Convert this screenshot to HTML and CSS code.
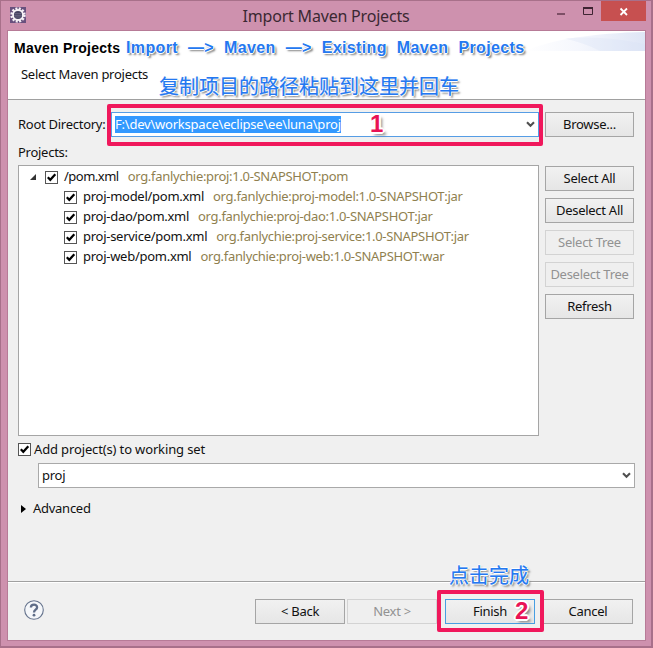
FILE: index.html
```html
<!DOCTYPE html>
<html lang="en">
<head>
<meta charset="utf-8">
<title>Import Maven Projects</title>
<link rel="stylesheet" href="styles.css">
</head>
<body>
<svg class="defs" width="0" height="0" aria-hidden="true">
  <symbol id="check" viewBox="0 0 13 13"><rect x=".5" y=".5" width="12" height="12" fill="#fff" stroke="#555"/><path d="M2.8 6.2 5.3 8.8 10.3 3.2" fill="none" stroke="#000" stroke-width="2.2"/></symbol>
  <symbol id="chevron" viewBox="0 0 9 7"><path d="M1 1.3 4.5 4.8 8 1.3" fill="none" stroke="#505050" stroke-width="2.1"/></symbol>
</svg>
<div class="window">
  <header class="titlebar">
    <svg class="app" viewBox="0 0 16 16"><rect width="16" height="16" fill="#68507d"/><circle cx="8" cy="8" r="6.4" fill="none" stroke="#f5f0f5" stroke-width="2.6" stroke-dasharray="2 1.35"/><circle cx="8" cy="8" r="5" fill="#454260" stroke="#f7f3f7" stroke-width="1.8"/><path d="M4.3 6.6h7.4M4 8.3h8M4.8 10h6.4" stroke="#77728e" stroke-width=".7"/></svg>
    <h1>Import Maven Projects</h1>
    <svg class="controls" viewBox="0 0 98 21"><path d="M3 14h8" stroke="#7d4f66" stroke-width="2"/><path d="M29.5 8.5h9v6h-9z" fill="none" stroke="#3f2433"/><path d="M29 8h10" stroke="#3f2433" stroke-width="2"/><path d="M47 1h45v20H47z" fill="#c75050"/><path d="m66.5 8.5 6.5 6.5m0-6.5-6.5 6.5" stroke="#fff" stroke-width="1.8"/></svg>
  </header>
  <main class="client">
    <section class="banner">
      <svg class="swoosh" viewBox="0 0 120 21" preserveAspectRatio="none"><defs><linearGradient id="sw"><stop offset="0" stop-color="#fff"/><stop offset=".45" stop-color="#f5f7fd"/><stop offset="1" stop-color="#dfe6f6"/></linearGradient></defs><path d="M0 21C25 9 70 2 120 1V21z" fill="url(#sw)"/><path d="M40 8Q78 4 120 14V21H75Q60 13 40 8" fill="#d8e1f4" opacity=".3"/></svg>
      <div class="heading"><h2>Maven Projects</h2><span class="note crumb"><b>Import</b><b>—&gt;</b><b>Maven</b><b>—&gt;</b><b>Existing</b><b>Maven</b><b>Projects</b></span></div>
      <div class="subheading"><span class="w-sub">Select Maven projects</span><span class="note zh">复制项目的路径粘贴到这里并回车</span></div>
    </section>
    <section class="form">
      <div class="root-row">
        <label class="root-label">Root Directory:</label>
        <div class="combo active"><span class="selected">F:\dev\workspace\eclipse\ee\luna\proj</span><svg class="chev"><use href="#chevron"/></svg><div class="frame frame-one"></div><span class="digit one">1</span></div>
        <button>Browse...</button>
      </div>
      <div class="projects-label">Projects:</div>
      <div class="projects">
        <ul class="tree">
          <li class="root"><svg class="arrow" viewBox="0 0 6 6"><path d="M6 0v6H0z" fill="#333"/></svg><svg class="box"><use href="#check"/></svg><span class="name">/pom.xml</span><span class="id">org.fanlychie:proj:1.0-SNAPSHOT:pom</span></li>
          <li><svg class="box"><use href="#check"/></svg><span class="name">proj-model/pom.xml</span><span class="id">org.fanlychie:proj-model:1.0-SNAPSHOT:jar</span></li>
          <li><svg class="box"><use href="#check"/></svg><span class="name">proj-dao/pom.xml</span><span class="id">org.fanlychie:proj-dao:1.0-SNAPSHOT:jar</span></li>
          <li><svg class="box"><use href="#check"/></svg><span class="name">proj-service/pom.xml</span><span class="id">org.fanlychie:proj-service:1.0-SNAPSHOT:jar</span></li>
          <li><svg class="box"><use href="#check"/></svg><span class="name">proj-web/pom.xml</span><span class="id">org.fanlychie:proj-web:1.0-SNAPSHOT:war</span></li>
        </ul>
        <div class="side">
          <button>Select All</button><button>Deselect All</button><button disabled>Select Tree</button><button disabled>Deselect Tree</button><button>Refresh</button>
        </div>
      </div>
      <div class="working-set"><svg class="box"><use href="#check"/></svg><span>Add project(s) to working set</span></div>
      <div class="combo set-combo"><span>proj</span><svg class="chev"><use href="#chevron"/></svg></div>
      <div class="advanced"><svg viewBox="0 0 5 8"><path d="M0 0 5 4 0 8z"/></svg><span>Advanced</span></div>
    </section>
    <footer class="footer">
      <svg class="help" viewBox="0 0 20 20"><circle cx="10" cy="10" r="9.3" fill="#f5f7fa" stroke="#65738d" stroke-width="1.1"/><path d="M6.9 7.6C6.9 3.7 13.2 3.8 13.1 7.4 13 9.8 10 9.6 10 12.4" fill="none" stroke="#5f6d88" stroke-width="2.3"/><circle cx="10" cy="15.2" r="1.4" fill="#5f6d88"/></svg>
      <button>&lt; Back</button><button disabled class="next">Next &gt;</button>
      <div class="finish"><button class="primary">Finish</button><div class="frame frame-two"></div><span class="digit two">2</span><span class="note zh done">点击完成</span></div>
      <button>Cancel</button>
    </footer>
  </main>
</div>
</body>
</html>
```
FILE: styles.css
```css
* { box-sizing: border-box; }
body { margin: 0; width: 653px; height: 648px; overflow: hidden; font: 13px/20px "Noto Sans", "Noto Sans CJK SC", sans-serif; letter-spacing: -.27px; color: #111; }
h1, h2, ul { margin: 0; padding: 0; }
svg { display: block; flex: none; }
.defs { position: absolute; }
.window { width: 653px; height: 648px; background: #ce91ae; border: 1px solid #a8708a; border-width: 1px 2px 2px 1px; padding: 0 5px 5px 6px; display: flex; flex-direction: column; }
.titlebar { height: 29px; display: flex; flex: none; }
.app { width: 16px; height: 16px; margin: 6px 0 0 3px; }
h1 { flex: 1; text-align: center; font: 16px/30px "Noto Sans", sans-serif; letter-spacing: -.2px; color: #3a2832; padding-left: 72px; }
.controls { width: 98px; height: 21px; margin: -1px -6px 0 0; }
.client { flex: 1; border: 1px solid #b77b97; background: #f0f0f0; display: flex; flex-direction: column; }
.banner { height: 69px; background: #fff; border-bottom: 1px solid #a0a0a0; position: relative; flex: none; }
.swoosh { position: absolute; right: 0; top: 0; width: 120px; height: 20px; }
.heading { display: flex; height: 34px; padding-left: 6px; align-items: center; position: relative; }
h2 { font: bold 14px/20px "Liberation Sans", sans-serif; color: #000; width: 112px; white-space: nowrap; letter-spacing: .25px; }
.note { color: #2478f0; white-space: nowrap; text-shadow: 1px 0 #fff, -1px 0 #fff, 0 1px #fff, 0 -1px #fff, 2px 2px 2px #777; }
.crumb { font: bold 16px/20px "Liberation Sans", sans-serif; letter-spacing: .36px; display: flex; gap: 10px; }
.subheading { display: flex; height: 34px; padding-left: 13px; position: relative; }
.w-sub { width: 138px; line-height: 18px; white-space: nowrap; }
.zh { font: 20px/26px "Noto Sans CJK SC", sans-serif; letter-spacing: 0; -webkit-text-stroke: .2px #2478f0; }
.subheading .zh { padding-top: 8px; }
.form { padding: 12px 0 0 10px; }
.root-row { display: flex; height: 25px; }
.root-label { width: 93px; line-height: 25px; white-space: nowrap; }
button { width: 89px; height: 25px; padding: 0; border: 1px solid #a5a5a5; background: linear-gradient(#f1f1f1, #e6e6e6); font: inherit; letter-spacing: inherit; color: #111; line-height: 23px; white-space: nowrap; }
button:disabled { color: #929292; border-color: #d3d3d3; background: #efefef; }
.combo { background: #fff; border: 1px solid #a9a9a9; height: 25px; display: flex; align-items: center; justify-content: space-between; position: relative; }
.combo > span:first-child { margin-top: -1px; }
.chev { width: 9px; height: 7px; margin-right: 3px; }
.active { width: 428px; border-color: #569de5; margin-right: 6px; padding-left: 3px; }
.selected { background: #3399ff; color: #fff; line-height: 17px; height: 17px; white-space: nowrap; letter-spacing: -.22px; }
.frame { position: absolute; border: 4px solid #f0185c; border-radius: 2px; }
.frame-one { inset: -9px -5px -10px -5px; }
.digit { position: absolute; font: bold 24px/25px "Liberation Sans", sans-serif; letter-spacing: 0; color: #e91355; text-shadow: 2px 0 #fff, -2px 0 #fff, 0 2px #fff, 0 -2px #fff, 1px 1px #fff, -1px 1px #fff, 1px -1px #fff, 3px 3px 3px #777; }
.one { left: 258px; top: -2px; }
.projects-label { height: 28px; line-height: 30px; }
.projects { display: flex; gap: 6px; }
.tree { width: 521px; height: 271px; list-style: none; background: #fff; border: 1px solid #a5a5a5; padding: 1px 0 0 11px; }
.tree li { display: flex; align-items: center; height: 20px; padding-left: 34px; white-space: nowrap; }
.tree .root { padding-left: 0; }
.arrow { width: 6px; height: 6px; margin-right: 9px; }
.box { width: 13px; height: 13px; }
.name { margin-left: 6px; }
.root .name { letter-spacing: -.5px; }
.id { margin-left: 9px; color: #8f7f4f; letter-spacing: -.32px; }
.name, .id { line-height: 18px; margin-top: -2px; }
.side { display: flex; flex-direction: column; gap: 7px; padding-top: 1px; }
.working-set { display: flex; align-items: center; gap: 3px; height: 27px; letter-spacing: -.14px; }
.working-set span { margin-top: -1px; }
.set-combo { width: 597px; margin-left: 20px; padding-left: 3px; }
.advanced { display: flex; align-items: center; gap: 7px; height: 42px; padding-left: 3px; }
.advanced span { margin-top: -2px; }
.advanced svg { width: 5px; height: 8px; }
.footer { height: 59px; margin-top: auto; border-top: 1px solid #a0a0a0; box-shadow: inset 0 1px #fff; padding: 17px 0 0 16px; display: flex; align-items: flex-start; }
.help { width: 20px; height: 20px; margin: 1px 211px 0 0; }
.footer button { width: 90px; }
.next { margin-left: 2px; }
.finish { position: relative; margin: 0 8px; }
.footer .primary { border: 1px solid #479ee2; display: block; }
.frame-two { inset: -9px -9px -8px -8px; }
.two { left: 70px; top: -1px; }
.done { position: absolute; left: 4px; top: -37px; }
```
